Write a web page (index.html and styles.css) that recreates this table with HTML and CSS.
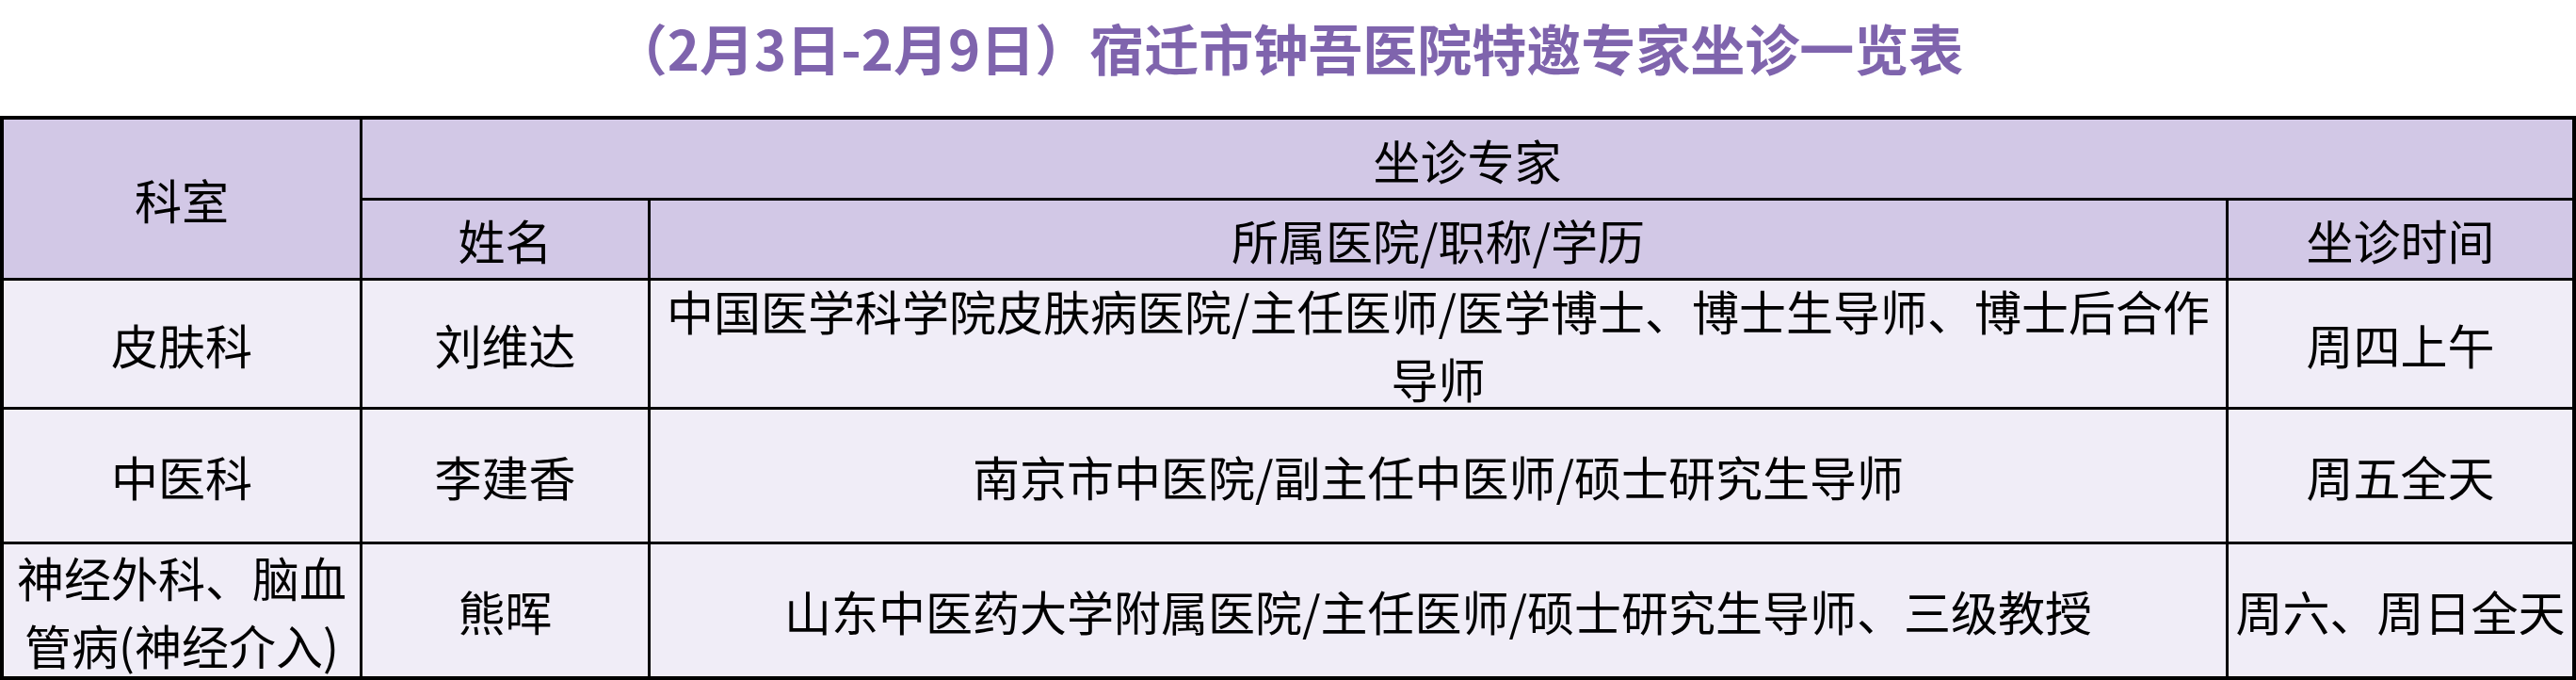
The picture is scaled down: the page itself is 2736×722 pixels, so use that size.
FILE: index.html
```html
<!DOCTYPE html>
<html lang="zh-CN">
<head>
<meta charset="utf-8">
<title>宿迁市钟吾医院特邀专家坐诊一览表</title>
<link rel="stylesheet" href="styles.css">
</head>
<body>
<div class="title">（2月3日-2月9日）宿迁市钟吾医院特邀专家坐诊一览表</div>
<div class="grid">
  <div class="cell head span-rows">科室</div>
  <div class="cell head span-cols">坐诊专家</div>
  <div class="cell head">姓名</div>
  <div class="cell head">所属医院/职称/学历</div>
  <div class="cell head">坐诊时间</div>

  <div class="cell">皮肤科</div>
  <div class="cell">刘维达</div>
  <div class="cell">中国医学科学院皮肤病医院/主任医师/医学博士、博士生导师、博士后合作导师</div>
  <div class="cell">周四上午</div>

  <div class="cell">中医科</div>
  <div class="cell">李建香</div>
  <div class="cell">南京市中医院/副主任中医师/硕士研究生导师</div>
  <div class="cell">周五全天</div>

  <div class="cell">神经外科、脑血管病(神经介入)</div>
  <div class="cell">熊晖</div>
  <div class="cell">山东中医药大学附属医院/主任医师/硕士研究生导师、三级教授</div>
  <div class="cell">周六、周日全天</div>
</div>
</body>
</html>
```

FILE: styles.css
```css
html, body {
  margin: 0;
  padding: 0;
  background: #ffffff;
}

body {
  font-family: "Noto Sans CJK SC", "Noto Sans", sans-serif;
  width: 2736px;
}

.title {
  height: 123px;
  box-sizing: border-box;
  padding-top: 21px;
  text-align: center;
  font-size: 58px;
  line-height: 58px;
  font-weight: 700;
  color: #7f64ad;
  white-space: nowrap;
}

.grid {
  display: grid;
  grid-template-columns: 378px 303px 1673px 365px;
  grid-template-rows: 83px 82px 134px 140px 140px;
  gap: 3px;
  padding: 4px;
  box-sizing: border-box;
  width: 2736px;
  background: #000000;
}

.cell {
  display: flex;
  align-items: center;
  justify-content: center;
  text-align: center;
  font-size: 50px;
  line-height: 72px;
  color: #000000;
  background: #f0edf7;
  overflow: visible;
}

.head {
  background: #d2c8e6;
}

.span-rows {
  grid-row: span 2;
}

.span-cols {
  grid-column: span 3;
}
```
